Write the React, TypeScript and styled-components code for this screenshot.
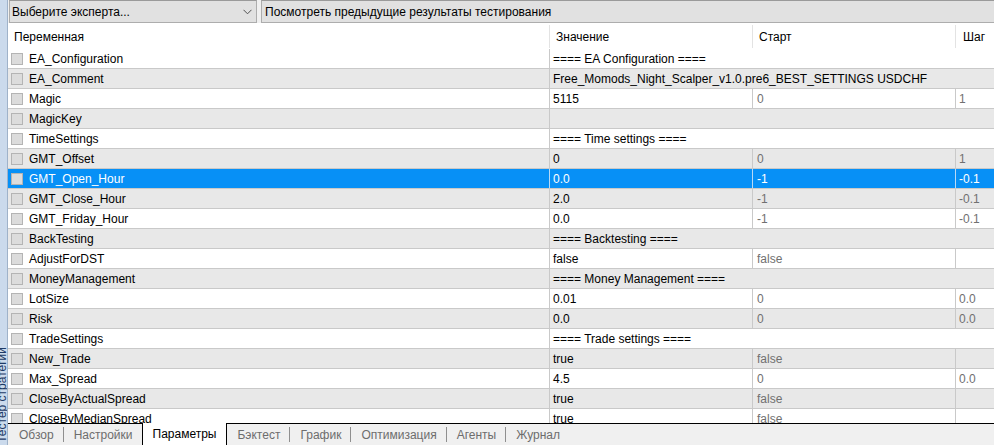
import React from "react";
import styled, { createGlobalStyle } from "styled-components";

const GlobalStyle = createGlobalStyle`
  html, body { margin: 0; padding: 0; background: #ffffff; }
  body {
    font-family: "Liberation Sans", Arial, sans-serif;
    font-size: 12px;
    color: #000;
  }
  * { box-sizing: border-box; }
`;

const FONT = `"Liberation Sans", Arial, sans-serif`;

const Root = styled.div`
  display: flex;
  width: 994px;
  height: 445px;
  overflow: hidden;
  background: #ffffff;
`;

const SideStrip = styled.div`
  width: 8px;
  flex: 0 0 8px;
  display: flex;
  flex-direction: column;
  justify-content: flex-end;
  background: #cbdaec;
  border-right: 1px solid #9fb2c9;
  overflow: hidden;
`;

const SideLabel = styled.span`
  writing-mode: vertical-rl;
  transform: rotate(180deg);
  font-family: ${FONT};
  font-size: 12px;
  line-height: 12px;
  color: #1e3a66;
  white-space: nowrap;
  margin-left: -4px;
  padding-top: 2px;
`;

const Main = styled.div`
  flex: 1;
  display: flex;
  flex-direction: column;
  min-width: 0;
`;

const Toolbar = styled.div`
  display: flex;
  height: 23px;
  flex: 0 0 23px;
  padding-left: 1px;
  gap: 4px;
  background: #f0f0f0;
`;

const SelectBox = styled.div`
  width: 248px;
  display: flex;
  align-items: center;
  justify-content: space-between;
  padding: 0 4px 0 2px;
  background: #e1e1e1;
  border: 1px solid #adadad;
  border-top-color: #9a9a9a;
  font-family: ${FONT};
  font-size: 12px;
  color: #000;
`;

const ViewButton = styled.div`
  flex: 1;
  display: flex;
  align-items: center;
  padding-left: 3px;
  background: #e1e1e1;
  border: 1px solid #adadad;
  border-top-color: #9a9a9a;
  border-right: none;
  font-family: ${FONT};
  font-size: 12px;
  color: #000;
  white-space: nowrap;
`;

const Table = styled.div`
  flex: 1;
  overflow: hidden;
  display: flex;
  flex-direction: column;
`;

const HeaderRow = styled.div`
  display: grid;
  grid-template-columns: 541px 203px 203px 1fr;
  height: 26px;
  flex: 0 0 26px;
  padding: 2px 0 1px;
  background: #ffffff;
`;

const HeaderCell = styled.div<{ $first?: boolean; $pad: number }>`
  display: flex;
  align-items: center;
  padding-left: ${(p) => p.$pad}px;
  border-left: ${(p) => (p.$first ? "none" : "1px solid #e3e3e3")};
  font-family: ${FONT};
  font-size: 12px;
  color: #000;
  white-space: nowrap;
`;

type RowTone = "white" | "gray" | "selected";

const Row = styled.div<{ $tone: RowTone }>`
  display: grid;
  grid-template-columns: 541px 203px 203px 1fr;
  height: 20px;
  flex: 0 0 20px;
  border-bottom: 1px solid #c9c9c9;
  background: ${(p) =>
    p.$tone === "selected" ? "#0790f6" : p.$tone === "gray" ? "#e8e8e8" : "#ffffff"};
  color: ${(p) => (p.$tone === "selected" ? "#ffffff" : "#000000")};
  font-family: ${FONT};
  font-size: 12px;
`;

const NameCell = styled.div`
  display: flex;
  align-items: center;
  padding-left: 3px;
  gap: 6px;
  white-space: nowrap;
  overflow: hidden;
`;

const Check = styled.span`
  width: 12px;
  height: 12px;
  flex: 0 0 12px;
  background: #dcdcdc;
  border: 1px solid #b4b4b4;
`;

const Cell = styled.div<{ $span?: boolean; $muted?: boolean; $selected?: boolean; $pad: number }>`
  display: flex;
  align-items: center;
  padding-left: ${(p) => p.$pad}px;
  border-left: 1px solid ${(p) => (p.$selected ? "#b9d9f5" : "#c9c9c9")};
  grid-column: ${(p) => (p.$span ? "2 / -1" : "auto")};
  color: ${(p) => (p.$selected ? "#ffffff" : p.$muted ? "#707070" : "inherit")};
  white-space: nowrap;
  overflow: hidden;
`;

const TabBar = styled.div`
  display: flex;
  align-items: stretch;
  height: 22px;
  flex: 0 0 22px;
  background: #f0f0f0;
  border-top: 1px solid #000000;
  padding-left: 1px;
`;

const Tab = styled.div<{ $active?: boolean }>`
  display: flex;
  align-items: center;
  padding: ${(p) => (p.$active ? "0 10px" : "0 9px 0 10px")};
  font-family: ${FONT};
  font-size: 12px;
  color: ${(p) => (p.$active ? "#000000" : "#6d6d6d")};
  background: ${(p) => (p.$active ? "#ffffff" : "transparent")};
  border-left: ${(p) => (p.$active ? "1px solid #000" : "none")};
  border-right: ${(p) => (p.$active ? "1px solid #000" : "none")};
  margin-top: ${(p) => (p.$active ? "-1px" : "0")};
  white-space: nowrap;
`;

const TabSep = styled.span`
  width: 1px;
  align-self: center;
  height: 15px;
  background: #8f8f8f;
`;

type Param =
  | { kind: "section"; name: string; value: string }
  | { kind: "value"; name: string; value: string; start: string; step: string };

const params: Param[] = [
  { kind: "section", name: "EA_Configuration", value: "==== EA Configuration ====" },
  { kind: "section", name: "EA_Comment", value: "Free_Momods_Night_Scalper_v1.0.pre6_BEST_SETTINGS USDCHF" },
  { kind: "value", name: "Magic", value: "5115", start: "0", step: "1" },
  { kind: "section", name: "MagicKey", value: "" },
  { kind: "section", name: "TimeSettings", value: "==== Time settings ====" },
  { kind: "value", name: "GMT_Offset", value: "0", start: "0", step: "1" },
  { kind: "value", name: "GMT_Open_Hour", value: "0.0", start: "-1", step: "-0.1" },
  { kind: "value", name: "GMT_Close_Hour", value: "2.0", start: "-1", step: "-0.1" },
  { kind: "value", name: "GMT_Friday_Hour", value: "0.0", start: "-1", step: "-0.1" },
  { kind: "section", name: "BackTesting", value: "==== Backtesting ====" },
  { kind: "value", name: "AdjustForDST", value: "false", start: "false", step: "" },
  { kind: "section", name: "MoneyManagement", value: "==== Money Management ====" },
  { kind: "value", name: "LotSize", value: "0.01", start: "0", step: "0.0" },
  { kind: "value", name: "Risk", value: "0.0", start: "0", step: "0.0" },
  { kind: "section", name: "TradeSettings", value: "==== Trade settings ====" },
  { kind: "value", name: "New_Trade", value: "true", start: "false", step: "" },
  { kind: "value", name: "Max_Spread", value: "4.5", start: "0", step: "0.0" },
  { kind: "value", name: "CloseByActualSpread", value: "true", start: "false", step: "" },
  { kind: "value", name: "CloseByMedianSpread", value: "true", start: "false", step: "" },
];

const SELECTED = 6;

const tabs = ["Обзор", "Настройки", "Параметры", "Бэктест", "График", "Оптимизация", "Агенты", "Журнал"];
const ACTIVE_TAB = 2;

function Chevron() {
  return (
    <svg width="9" height="6" viewBox="0 0 9 6" fill="none">
      <path d="M0.5 0.8 L4.5 4.8 L8.5 0.8" stroke="#505050" strokeWidth="1" />
    </svg>
  );
}

export default function App() {
  return (
    <>
      <GlobalStyle />
      <Root>
        <SideStrip>
          <SideLabel>Тестер стратегии</SideLabel>
        </SideStrip>
        <Main>
          <Toolbar>
            <SelectBox>
              <span>Выберите эксперта...</span>
              <Chevron />
            </SelectBox>
            <ViewButton>Посмотреть предыдущие результаты тестирования</ViewButton>
          </Toolbar>
          <Table>
            <HeaderRow>
              <HeaderCell $first $pad={6}>Переменная</HeaderCell>
              <HeaderCell $pad={6}>Значение</HeaderCell>
              <HeaderCell $pad={6}>Старт</HeaderCell>
              <HeaderCell $pad={7}>Шаг</HeaderCell>
            </HeaderRow>
            {params.map((p, i) => {
              const selected = i === SELECTED;
              const tone: RowTone = selected ? "selected" : i % 2 === 0 ? "white" : "gray";
              return (
                <Row key={p.name} $tone={tone}>
                  <NameCell>
                    <Check />
                    <span>{p.name}</span>
                  </NameCell>
                  {p.kind === "section" ? (
                    <Cell $span $pad={3} $selected={selected}>{p.value}</Cell>
                  ) : (
                    <>
                      <Cell $pad={3} $selected={selected}>{p.value}</Cell>
                      <Cell $pad={4} $muted $selected={selected}>{p.start}</Cell>
                      <Cell $pad={3} $muted $selected={selected}>{p.step}</Cell>
                    </>
                  )}
                </Row>
              );
            })}
          </Table>
          <TabBar>
            {tabs.map((t, i) => {
              const showSep =
                i > 0 && i !== ACTIVE_TAB && i - 1 !== ACTIVE_TAB;
              return (
                <React.Fragment key={t}>
                  {showSep && <TabSep />}
                  <Tab $active={i === ACTIVE_TAB}>{t}</Tab>
                </React.Fragment>
              );
            })}
          </TabBar>
        </Main>
      </Root>
    </>
  );
}
